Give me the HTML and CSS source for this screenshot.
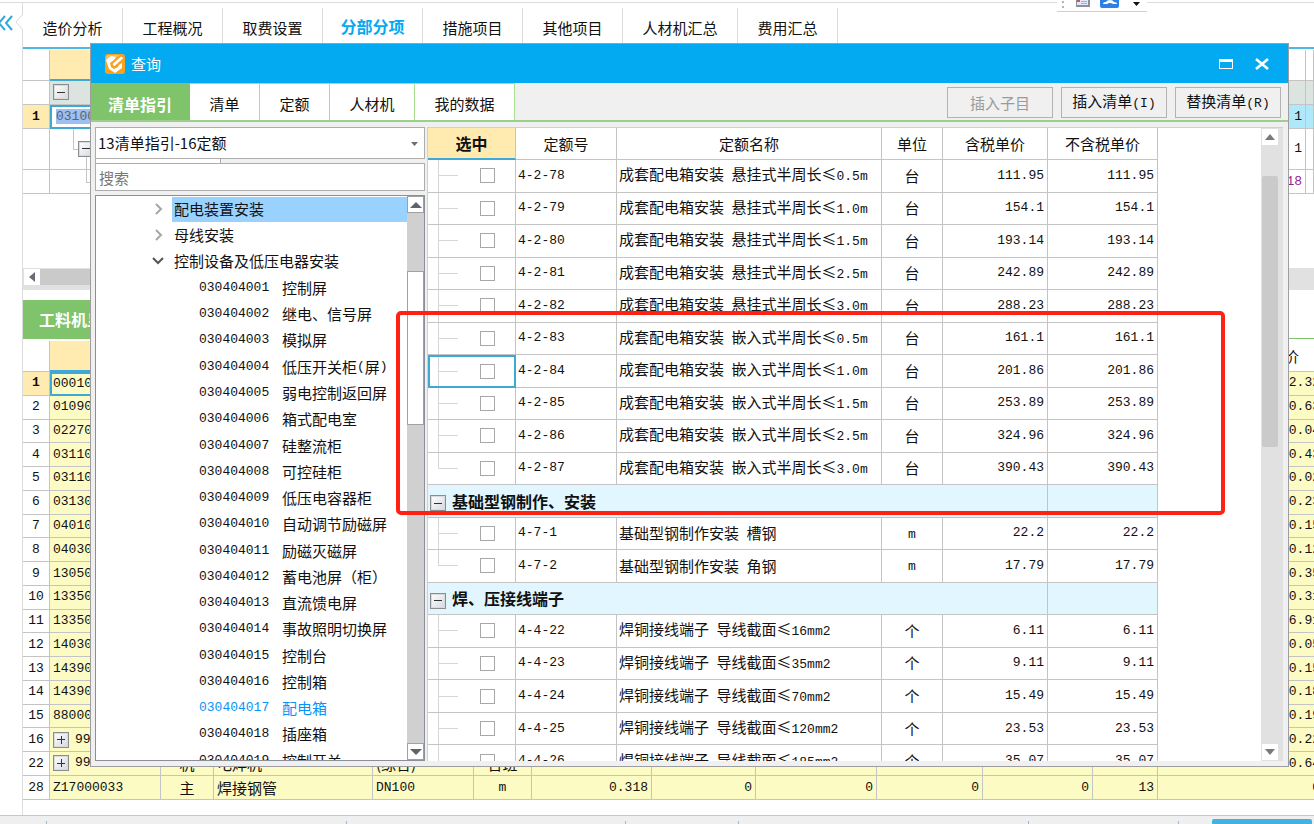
FILE: index.html
```html
<!DOCTYPE html>
<html lang="zh-CN">
<head>
<meta charset="utf-8">
<title>查询</title>
<link rel="stylesheet" href="styles.css">
</head>
<body>
<div class="app">
  <div class="topline"></div>
  <div class="workspace">
    <aside class="rail">
      <svg class="rail-icon" width="14" height="18" viewBox="0 0 14 18" fill="none" stroke="#2fa9dc" stroke-width="2"><path d="M5 2-1 9l6 7M12 2 6 9l6 7"/></svg>
      <svg class="rail-notch" width="8" height="16" viewBox="0 0 8 16" fill="#fff" stroke="#d8d8d8"><path d="M8 0 1 8l7 8"/></svg>
    </aside>
    <main class="main">
      <nav class="tabs">
        <a href="#">造价分析</a><a href="#">工程概况</a><a href="#">取费设置</a><a href="#" class="on">分部分项</a><a href="#">措施项目</a><a href="#">其他项目</a><a href="#" class="wide">人材机汇总</a><a href="#">费用汇总</a>
      </nav>
      <table class="sheet items">
        <colgroup><col class="c-no"><col><col class="c-qty"><col class="c-edge"></colgroup>
        <thead><tr><th></th><th class="picked"></th><th></th><th></th></tr></thead>
        <tbody>
          <tr class="r-sum"><td></td><td><span class="exp minus"></span></td><td></td><td></td></tr>
          <tr class="r-cur"><td class="no">1</td><td class="focus"><span class="marked">03100</span></td><td class="num">1</td><td></td></tr>
          <tr class="r-tall"><td></td><td class="branch"><span class="exp minus sub"></span></td><td class="num">1</td><td></td></tr>
          <tr class="r-last"><td></td><td class="leaf"></td><td class="num purple">18</td><td></td></tr>
        </tbody>
      </table>
      <div class="hscroll"><button class="sb-btn" aria-label="向左"><svg width="6" height="10" viewBox="0 0 6 10"><path d="M6 0v10L0 5z" fill="#6a6d78"/></svg></button><span class="hthumb"></span></div>
      <div class="subtabs"><a href="#">工料机显示</a></div>
      <table class="sheet parts">
        <colgroup><col class="c-no"><col class="p1"><col class="p2"><col class="p3"><col class="p4"><col class="p5"><col class="p6"><col class="p7"><col class="p8"><col class="p9"><col class="p10"><col class="p11"><col></colgroup>
        <thead><tr><th></th><th class="picked"></th><th></th><th></th><th></th><th></th><th></th><th></th><th></th><th></th><th></th><th></th><th class="price">合价</th></tr></thead>
        <tbody>
          <tr class="r-cur"><td class="no">1</td><td class="focus">00010</td><td colspan="10"></td><td class="num">2.32</td></tr>
          <tr><td>2</td><td>01090</td><td colspan="10"></td><td class="num">0.63</td></tr>
          <tr><td>3</td><td>02270</td><td colspan="10"></td><td class="num">0.04</td></tr>
          <tr><td>4</td><td>03110</td><td colspan="10"></td><td class="num">0.43</td></tr>
          <tr><td>5</td><td>03110</td><td colspan="10"></td><td class="num">0.02</td></tr>
          <tr><td>6</td><td>03130</td><td colspan="10"></td><td class="num">0.23</td></tr>
          <tr><td>7</td><td>04010</td><td colspan="10"></td><td class="num">0.15</td></tr>
          <tr><td>8</td><td>04030</td><td colspan="10"></td><td class="num">0.12</td></tr>
          <tr><td>9</td><td>13050</td><td colspan="10"></td><td class="num">0.35</td></tr>
          <tr><td>10</td><td>13350</td><td colspan="10"></td><td class="num">0.31</td></tr>
          <tr><td>11</td><td>13350</td><td colspan="10"></td><td class="num">6.91</td></tr>
          <tr><td>12</td><td>14030</td><td colspan="10"></td><td class="num">0.05</td></tr>
          <tr><td>13</td><td>14390</td><td colspan="10"></td><td class="num">0.15</td></tr>
          <tr><td>14</td><td>14390</td><td colspan="10"></td><td class="num">0.18</td></tr>
          <tr><td>15</td><td>88000</td><td colspan="10"></td><td class="num">0.19</td></tr>
          <tr><td>16</td><td><span class="exp plus"></span>99</td><td colspan="10"></td><td class="num">0.22</td></tr>
          <tr><td>22</td><td><span class="exp plus"></span>990910710</td><td class="mid">机</td><td class="cjk">电焊机</td><td class="cjk">(综合)</td><td class="mid">台班</td><td class="num">0.080</td><td class="num">71.88</td><td class="num">71.88</td><td class="num">71.88</td><td class="num">77.8</td><td></td><td class="num">0.64</td></tr>
          <tr><td>28</td><td>Z17000033</td><td class="mid">主</td><td class="cjk">焊接钢管</td><td>DN100</td><td class="mid small">m</td><td class="num">0.318</td><td class="num">0</td><td class="num">0</td><td class="num">0</td><td class="num">0</td><td class="num">13</td><td class="num">0</td></tr>
        </tbody>
      </table>
    </main>
  </div>
  <footer class="status"><span class="s1"></span><span class="s2"></span><span class="s3"></span><span class="s4"></span><span class="s5"></span><span class="s6"></span><button aria-label="状态"></button></footer>
</div>

<div class="quickbar">
  <svg width="90" height="11" viewBox="0 0 90 11">
    <path d="M5 1h2v2H5zM5 6h2v2H5z" fill="#b5b5b5"/>
    <path d="M19 0h14v7H19z" fill="#8f8f9c"/><path d="M20 0h11v5H20z" fill="#dfe9fb"/><path d="M20 0h3v2h-3z" fill="#e4513d"/><path d="M24 1h6v1h-6zM24 3h6v1h-6z" fill="#8fb3ea"/>
    <path d="M43 0h19v6q0 2-2 2H45q-2 0-2-2z" fill="#2f80e6"/><path d="M46 4q0-2 3-2 1-2 4-2t4 2q3 0 3 2-2 0-4 0-1-1-3-1t-3 1z" fill="#fff"/>
    <path d="M76 2h7l-3.500 4z" fill="#111"/>
  </svg>
</div>

<section class="dialog" role="dialog" aria-labelledby="dlg-title">
  <header class="titlebar">
    <svg class="logo" width="20" height="20" viewBox="0 0 20 20"><rect width="20" height="20" rx="3" fill="#f9a21b"/><path d="M3 1h12L4 9 1 7V3z" fill="#fbc06a"/><path d="M11 3 6 2 1 6l3 9 6 4 7-5 0-5-3 2-1 2-4 2-3-2-1-4 4-3z" fill="#fff"/><path d="m7 10 2 3L19 4l-3-2z" fill="#fff" stroke="#f0951a" stroke-width=".8"/></svg>
    <h1 id="dlg-title">查询</h1>
    <button aria-label="最大化"><svg width="14" height="10" viewBox="0 0 14 10"><path d="M0 0h14v10H0zM1 3v6h12V3z" fill="#fff" fill-rule="evenodd"/></svg></button>
    <button aria-label="关闭"><svg width="14" height="12" viewBox="0 0 14 12" stroke="#fff" stroke-width="2.600"><path d="m1 1 12 10M13 1 1 11"/></svg></button>
  </header>
  <div class="toolbar">
    <nav class="dtabs"><a href="#" class="on">清单指引</a><a href="#" class="w70">清单</a><a href="#" class="w70">定额</a><a href="#" class="w85">人材机</a><a href="#">我的数据</a></nav>
    <div class="actions"><button disabled>插入子目</button><button>插入清单<span class="mono">(I)</span></button><button>替换清单<span class="mono">(R)</span></button></div>
  </div>
  <div class="panes">
    <div class="side">
      <div class="combo">
        <select aria-label="定额库"><option>13清单指引-16定额</option></select>
        <svg width="7" height="4" viewBox="0 0 7 4"><path d="M0 0h7L3.500 4z" fill="#6a6d78"/></svg>
      </div>
      <div class="strip"><span></span></div>
      <input class="search" type="text" placeholder="搜索" aria-label="搜索">
      <div class="treebox">
        <ul class="tree">
          <li class="dir sel"><svg width="12" height="12" viewBox="0 0 12 12" fill="none" stroke="#a6a6a6" stroke-width="2"><path d="m4 1 5 5-5 5"/></svg><span>配电装置安装</span></li>
          <li class="dir"><svg width="12" height="12" viewBox="0 0 12 12" fill="none" stroke="#a6a6a6" stroke-width="2"><path d="m4 1 5 5-5 5"/></svg><span>母线安装</span></li>
          <li class="dir"><svg width="12" height="12" viewBox="0 0 12 12" fill="none" stroke="#555" stroke-width="2"><path d="m1 2 5 5 5-5"/></svg><span>控制设备及低压电器安装</span></li>
          <li><code>030404001</code>控制屏</li>
          <li><code>030404002</code>继电、信号屏</li>
          <li><code>030404003</code>模拟屏</li>
          <li><code>030404004</code>低压开关柜<span class="mono">(</span>屏<span class="mono">)</span></li>
          <li><code>030404005</code>弱电控制返回屏</li>
          <li><code>030404006</code>箱式配电室</li>
          <li><code>030404007</code>硅整流柜</li>
          <li><code>030404008</code>可控硅柜</li>
          <li><code>030404009</code>低压电容器柜</li>
          <li><code>030404010</code>自动调节励磁屏</li>
          <li><code>030404011</code>励磁灭磁屏</li>
          <li><code>030404012</code>蓄电池屏（柜）</li>
          <li><code>030404013</code>直流馈电屏</li>
          <li><code>030404014</code>事故照明切换屏</li>
          <li><code>030404015</code>控制台</li>
          <li><code>030404016</code>控制箱</li>
          <li class="hot"><code>030404017</code>配电箱</li>
          <li><code>030404018</code>插座箱</li>
          <li><code>030404019</code>控制开关</li>
        </ul>
        <div class="vscroll old"><button class="sb-btn" aria-label="向上"><svg width="12" height="6" viewBox="0 0 12 6"><path d="M0 6h12L6 0z" fill="#5f6270"/></svg></button><span class="thumb"></span><button class="sb-btn" aria-label="向下"><svg width="12" height="6" viewBox="0 0 12 6"><path d="M0 0h12L6 6z" fill="#5f6270"/></svg></button></div>
      </div>
    </div>
    <div class="content">
      <div class="tablewrap">
      <table class="quota">
        <colgroup><col class="q1"><col class="q2"><col><col class="q4"><col class="q5"><col class="q6"></colgroup>
        <thead><tr><th class="picked">选中</th><th>定额号</th><th>定额名称</th><th>单位</th><th>含税单价</th><th>不含税单价</th></tr></thead>
        <tbody>
          <tr><td class="pick"><input type="checkbox" aria-label="4-2-78"></td><td class="code">4-2-78</td><td>成套配电箱安装&ensp;悬挂式半周长≤<span class="mono">0.5m</span></td><td class="unit">台</td><td class="num">111.95</td><td class="num">111.95</td></tr>
          <tr><td class="pick"><input type="checkbox" aria-label="4-2-79"></td><td class="code">4-2-79</td><td>成套配电箱安装&ensp;悬挂式半周长≤<span class="mono">1.0m</span></td><td class="unit">台</td><td class="num">154.1</td><td class="num">154.1</td></tr>
          <tr><td class="pick"><input type="checkbox" aria-label="4-2-80"></td><td class="code">4-2-80</td><td>成套配电箱安装&ensp;悬挂式半周长≤<span class="mono">1.5m</span></td><td class="unit">台</td><td class="num">193.14</td><td class="num">193.14</td></tr>
          <tr><td class="pick"><input type="checkbox" aria-label="4-2-81"></td><td class="code">4-2-81</td><td>成套配电箱安装&ensp;悬挂式半周长≤<span class="mono">2.5m</span></td><td class="unit">台</td><td class="num">242.89</td><td class="num">242.89</td></tr>
          <tr><td class="pick"><input type="checkbox" aria-label="4-2-82"></td><td class="code">4-2-82</td><td>成套配电箱安装&ensp;悬挂式半周长≤<span class="mono">3.0m</span></td><td class="unit">台</td><td class="num">288.23</td><td class="num">288.23</td></tr>
          <tr><td class="pick"><input type="checkbox" aria-label="4-2-83"></td><td class="code">4-2-83</td><td>成套配电箱安装&ensp;嵌入式半周长≤<span class="mono">0.5m</span></td><td class="unit">台</td><td class="num">161.1</td><td class="num">161.1</td></tr>
          <tr><td class="pick current"><input type="checkbox" aria-label="4-2-84"></td><td class="code">4-2-84</td><td>成套配电箱安装&ensp;嵌入式半周长≤<span class="mono">1.0m</span></td><td class="unit">台</td><td class="num">201.86</td><td class="num">201.86</td></tr>
          <tr><td class="pick"><input type="checkbox" aria-label="4-2-85"></td><td class="code">4-2-85</td><td>成套配电箱安装&ensp;嵌入式半周长≤<span class="mono">1.5m</span></td><td class="unit">台</td><td class="num">253.89</td><td class="num">253.89</td></tr>
          <tr><td class="pick"><input type="checkbox" aria-label="4-2-86"></td><td class="code">4-2-86</td><td>成套配电箱安装&ensp;嵌入式半周长≤<span class="mono">2.5m</span></td><td class="unit">台</td><td class="num">324.96</td><td class="num">324.96</td></tr>
          <tr><td class="pick end"><input type="checkbox" aria-label="4-2-87"></td><td class="code">4-2-87</td><td>成套配电箱安装&ensp;嵌入式半周长≤<span class="mono">3.0m</span></td><td class="unit">台</td><td class="num">390.43</td><td class="num">390.43</td></tr>
          <tr class="group"><th colspan="5"><span class="exp minus"></span>基础型钢制作、安装</th><td></td></tr>
          <tr><td class="pick"><input type="checkbox" aria-label="4-7-1"></td><td class="code">4-7-1</td><td>基础型钢制作安装&ensp;槽钢</td><td class="unit"><span class="mono">m</span></td><td class="num">22.2</td><td class="num">22.2</td></tr>
          <tr><td class="pick end"><input type="checkbox" aria-label="4-7-2"></td><td class="code">4-7-2</td><td>基础型钢制作安装&ensp;角钢</td><td class="unit"><span class="mono">m</span></td><td class="num">17.79</td><td class="num">17.79</td></tr>
          <tr class="group"><th colspan="5"><span class="exp minus"></span>焊、压接线端子</th><td></td></tr>
          <tr><td class="pick"><input type="checkbox" aria-label="4-4-22"></td><td class="code">4-4-22</td><td>焊铜接线端子&ensp;导线截面≤<span class="mono">16mm2</span></td><td class="unit">个</td><td class="num">6.11</td><td class="num">6.11</td></tr>
          <tr><td class="pick"><input type="checkbox" aria-label="4-4-23"></td><td class="code">4-4-23</td><td>焊铜接线端子&ensp;导线截面≤<span class="mono">35mm2</span></td><td class="unit">个</td><td class="num">9.11</td><td class="num">9.11</td></tr>
          <tr><td class="pick"><input type="checkbox" aria-label="4-4-24"></td><td class="code">4-4-24</td><td>焊铜接线端子&ensp;导线截面≤<span class="mono">70mm2</span></td><td class="unit">个</td><td class="num">15.49</td><td class="num">15.49</td></tr>
          <tr><td class="pick"><input type="checkbox" aria-label="4-4-25"></td><td class="code">4-4-25</td><td>焊铜接线端子&ensp;导线截面≤<span class="mono">120mm2</span></td><td class="unit">个</td><td class="num">23.53</td><td class="num">23.53</td></tr>
          <tr><td class="pick"><input type="checkbox" aria-label="4-4-26"></td><td class="code">4-4-26</td><td>焊铜接线端子&ensp;导线截面≤<span class="mono">185mm2</span></td><td class="unit">个</td><td class="num">35.07</td><td class="num">35.07</td></tr>
        </tbody>
      </table>
      </div>
      <div class="vscroll flat"><button class="sb-btn" aria-label="向上"><svg width="10" height="6" viewBox="0 0 10 6"><path d="M0 6h10L5 0z" fill="#77797f"/></svg></button><span class="thumb"></span><button class="sb-btn" aria-label="向下"><svg width="10" height="6" viewBox="0 0 10 6"><path d="M0 0h10L5 6z" fill="#77797f"/></svg></button></div>
    </div>
  </div>
</section>
<div class="highlight"></div>
</body>
</html>
```
FILE: styles.css
```css
:root {
  --cjk: "Noto Sans CJK SC", "Noto Sans", sans-serif;
  --mono: "Liberation Mono", "Noto Sans CJK SC", monospace;
  --line: #c4c4c4;
  --blue: #03a9f1;
  --edge: #3fa9d5;
  --green: #7fc36a;
  --yellow: #ffebb0;
}
* { box-sizing: border-box; }
html, body { height: 100%; }
body {
  margin: 0;
  position: relative;
  overflow: hidden;
  background: #fff;
  color: #111;
  font: 15px/20px var(--cjk);
}
a { color: inherit; text-decoration: none; }
button { padding: 0; border: 0; background: none; font: inherit; color: inherit; }
.mono { font-family: var(--mono); font-size: 13px; }

.app { display: flex; flex-direction: column; height: 100%; }
.topline { height: 3px; border-bottom: 1px solid #dcdcdc; flex: none; }
.workspace { flex: 1; display: flex; min-height: 0; }
.rail {
  flex: none;
  width: 23px;
  padding-top: 11px;
  display: flex;
  align-items: flex-start;
  justify-content: space-between;
  border-right: 1px solid #dcdcdc;
}
.rail-notch { margin-right: -1px; }
.main { flex: 1; min-width: 0; overflow: hidden; padding-top: 5px; }

.tabs { display: flex; height: 41px; border-bottom: 2px solid #4cb9e6; margin-bottom: 1px; }
.tabs a {
  width: 100px;
  height: 39px;
  line-height: 39px;
  text-align: center;
  border-right: 1px solid #dcdcdc;
}
.tabs .wide { width: 115px; }
.tabs .on { color: var(--blue); font-weight: 700; font-size: 16px; line-height: 37px; }

.sheet {
  width: 100%;
  table-layout: fixed;
  border-collapse: separate;
  border-spacing: 0;
  font: 13px/16px var(--mono);
}
.sheet th, .sheet td {
  padding: 0 3px;
  border-right: 1px solid var(--line);
  border-bottom: 1px solid var(--line);
  white-space: nowrap;
  overflow: hidden;
}
.sheet td:first-child { text-align: center; padding: 0; }
.sheet .picked, .quota .picked { background: var(--yellow); border-bottom: 2px solid var(--edge); }
.sheet .no { background: var(--yellow); font-weight: 700; }
.sheet .num { text-align: right; }
.sheet .mid { text-align: center; font-family: var(--cjk); font-size: 15px; }
.sheet .small { font-family: var(--mono); font-size: 13px; }
.sheet .cjk { font-family: var(--cjk); font-size: 15px; }
.sheet .purple { color: #8f1f9d; }
.c-no { width: 27px; }
.c-qty { width: 100px; }
.c-edge { width: 8px; }
.items thead tr { height: 31px; }
.items .r-sum { height: 24px; }
.items .r-sum td:not(:first-child) { background: #dbe4df; }
.items .r-cur { height: 24px; }
.items .r-cur td:not(.no) { background: #b0e8fb; }
.items .r-tall { height: 41px; }
.items .r-last { height: 24px; }
.items .branch {
  background:
    linear-gradient(var(--line), var(--line)) 23px 0 / 1px 20px no-repeat,
    linear-gradient(var(--line), var(--line)) 23px 20px / 6px 1px no-repeat,
    linear-gradient(var(--line), var(--line)) 36px 28px / 1px 13px no-repeat;
}
.items .leaf {
  background:
    linear-gradient(var(--line), var(--line)) 36px 0 / 1px 12px no-repeat,
    linear-gradient(var(--line), var(--line)) 36px 12px / 10px 1px no-repeat;
}
.sheet td.focus { border: 2px solid var(--edge); padding: 0 1px; }
.items .r-cur td.focus { background: #fff; padding: 0 4px; }
.marked { background: #9fbfee; color: #596273; }

.exp {
  display: inline-block;
  width: 16px;
  height: 16px;
  vertical-align: middle;
  border: 1px solid #8d8d8d;
  box-shadow: inset 0 0 0 1px #dadada;
  background: linear-gradient(#333, #333) center / 8px 1px no-repeat, linear-gradient(135deg, #fff, #d4d8e0);
}
.exp.plus { background: linear-gradient(#333, #333) center / 8px 1px no-repeat, linear-gradient(#333, #333) center / 1px 8px no-repeat, linear-gradient(135deg, #fff, #d4d8e0); margin-right: 6px; }
.exp.sub { margin-left: 25px; }

.hscroll { display: flex; margin-top: 74px; height: 22px; padding: 1px 0 5px 1px; background: #e1e1e1; }
.sb-btn { flex: none; display: flex; align-items: center; justify-content: center; width: 16px; height: 16px; background: #fff; }
.hthumb { width: 600px; background: #cacaca; }
.subtabs { margin-top: 10px; display: flex; border-bottom: 1px solid var(--green); margin-bottom: 2px; }
.subtabs a { padding: 0 16px; line-height: 38px; color: #fff; background: var(--green); font-size: 16px; font-weight: 700; }

.parts { height: 459px; width: calc(100% + 10px); }
.parts thead tr { height: 31px; }
.parts tbody tr { height: 23px; }
.parts td { background: #fcfbc4; }
.parts tr:not(.r-cur) td:first-child { background: #fff; }
.parts th.price { text-align: right; padding-right: 24px; font: 15px/20px var(--cjk); }
.p1 { width: 111px; } .p2 { width: 53px; } .p3 { width: 159px; } .p4 { width: 101px; }
.p5 { width: 58px; } .p6 { width: 120px; } .p7 { width: 104px; } .p8 { width: 121px; }
.p9 { width: 106px; } .p10 { width: 110px; } .p11 { width: 65px; }

.status { flex: none; height: 9px; display: flex; align-items: flex-end; background: #efefef; border-top: 1px solid #c6c6c6; }
.status span { height: 3px; border-right: 1px solid #a9b4c2; }
.s1 { width: 47px; } .s2 { width: 300px; } .s3 { width: 279px; } .s4 { width: 113px; } .s5 { width: 290px; } .s6 { width: 150px; }
.status button { width: 100px; height: 5px; margin: 0 2px 0 auto; border-radius: 2px 2px 0 0; background: #41b3e1; }

.quickbar { position: absolute; top: 0; right: 167px; background: #fff; border-bottom: 1px solid #cfcfcf; }
.quickbar svg { display: block; }

.dialog {
  position: absolute;
  top: 43px;
  right: 25px;
  bottom: 57px;
  left: 90px;
  display: flex;
  flex-direction: column;
  border: 1px solid #9e9e9e;
  background: #f0f0f0;
}
.titlebar { flex: none; display: flex; align-items: center; height: 39px; padding: 0 19px 0 14px; background: var(--blue); color: #fff; }
.titlebar h1 { flex: 1; margin: 0 0 0 6px; font-size: 15px; font-weight: 400; }
.titlebar button { display: flex; margin-left: 22px; }
.toolbar { flex: none; display: flex; justify-content: space-between; height: 39px; border-bottom: 2px solid #9bcf8b; }
.dtabs { display: flex; }
.dtabs a { width: 100px; line-height: 40px; text-align: center; background: #fff; border-top: 1px solid #a8e08f; border-right: 1px solid #a8e08f; height: 37px; }
.dtabs .w70 { width: 70px; }
.dtabs .w85 { width: 85px; }
.dtabs .on { width: 99px; color: #fff; background: var(--green); border-color: var(--green); font-size: 16px; font-weight: 700; }
.actions { display: flex; gap: 8px; padding: 4px 7px 0 0; }
.actions button { width: 106px; height: 31px; border: 1px solid #b3b3b3; }
.actions button:disabled { color: #9a9a9a; }

.panes { flex: 1; min-height: 0; display: flex; gap: 2px; padding: 5px 5px 5px 4px; }
.side { flex: none; width: 330px; display: flex; flex-direction: column; }
.combo { flex: none; position: relative; height: 32px; display: flex; }
.combo select { flex: 1; padding: 0 2px; border: 1px solid #adadad; border-radius: 0; background: #fff; color: #111; font: 15px/20px var(--cjk); appearance: none; }
.combo svg { position: absolute; right: 7px; top: 15px; }
.strip { flex: none; height: 4px; border-left: 1px solid #adadad; }
.strip span { display: block; width: 125px; height: 4px; background: #fff; border-right: 1px solid #adadad; }
.search { flex: none; height: 28px; padding: 0 3px; border: 1px solid #adadad; background: #fff; font: 15px/20px var(--cjk); }
.search::placeholder { color: #777; opacity: 1; }
.treebox { flex: 1; min-height: 0; display: flex; margin-top: 4px; border: 1px solid #8b8f99; background: #fff; overflow: hidden; }
.tree { flex: 1; height: 578px; margin: 0; padding: 0; list-style: none; display: flex; flex-direction: column; }
.tree li { flex: 1; display: flex; align-items: center; padding-left: 103px; white-space: nowrap; }
.tree .dir { padding-left: 56px; gap: 8px; }
.tree .dir span { flex: 1; padding: 2px 2px 3px; }
.tree .sel span { background: #99d1ff; }
.tree code { width: 83px; font: 13px/20px var(--mono); }
.tree .hot { color: #0a93f5; }

.vscroll { flex: none; display: flex; flex-direction: column; }
.vscroll.old { width: 17px; background: #d0d0d0; }
.old .sb-btn { width: 17px; height: 17px; border: 1px solid #a0a0a0; }
.old .thumb { margin-top: 58px; height: 154px; background: #fff; border: 1px solid #a0a0a0; }
.vscroll .sb-btn:last-child { margin-top: auto; }

.content { flex: 1; min-width: 0; display: flex; background: #fff; border-top: 1px solid #d0d0d0; border-left: 1px solid #d0d0d0; overflow: hidden; }
.tablewrap { flex: 1; min-width: 0; padding-right: 103px; }
.quota { width: 100%; height: 650px; table-layout: fixed; border-collapse: separate; border-spacing: 0; }
.quota tr { height: 32px; }
.quota th, .quota td { padding: 0 2px; border-right: 1px solid var(--line); border-bottom: 1px solid var(--line); font-weight: 400; white-space: nowrap; }
.quota .picked { font-weight: 700; font-size: 16px; }
.quota .code { font: 13px/20px var(--mono); }
.quota .num { text-align: right; padding-right: 3px; font: 13px/20px var(--mono); }
.quota .unit { text-align: center; }
.quota .pick {
  padding: 0 0 0 52px;
  background: linear-gradient(#d6d6d6, #d6d6d6) 10px 0 / 1px 100% no-repeat, linear-gradient(#d6d6d6, #d6d6d6) 10px 50% / 20px 1px no-repeat;
}
.quota .end { background-size: 1px 50%, 20px 1px; }
.quota .current { border: 2px solid var(--edge); padding-left: 50px; background-position: 8px 0, 8px 50%; }
.pick input { display: block; appearance: none; width: 15px; height: 15px; margin: 0; border: 1px solid #a8a8a8; background: #fff; }
.quota .group th, .quota .group td { background: #e1f6fe; }
.quota .group th { text-align: left; font-weight: 700; font-size: 16px; }
.group .exp { margin-right: 6px; }
.q1 { width: 88px; } .q2 { width: 101px; } .q4 { width: 61px; } .q5 { width: 105px; } .q6 { width: 110px; }
.flat { width: 22px; padding: 1px 5px 1px 1px; background: #e1e1e1; }
.flat .thumb { margin-top: 31px; height: 271px; background: #cacaca; border-radius: 2px; }

.highlight { position: absolute; left: 396px; top: 311px; right: 89px; height: 204px; border: 4px solid #ff2213; border-radius: 5px; pointer-events: none; }
```
